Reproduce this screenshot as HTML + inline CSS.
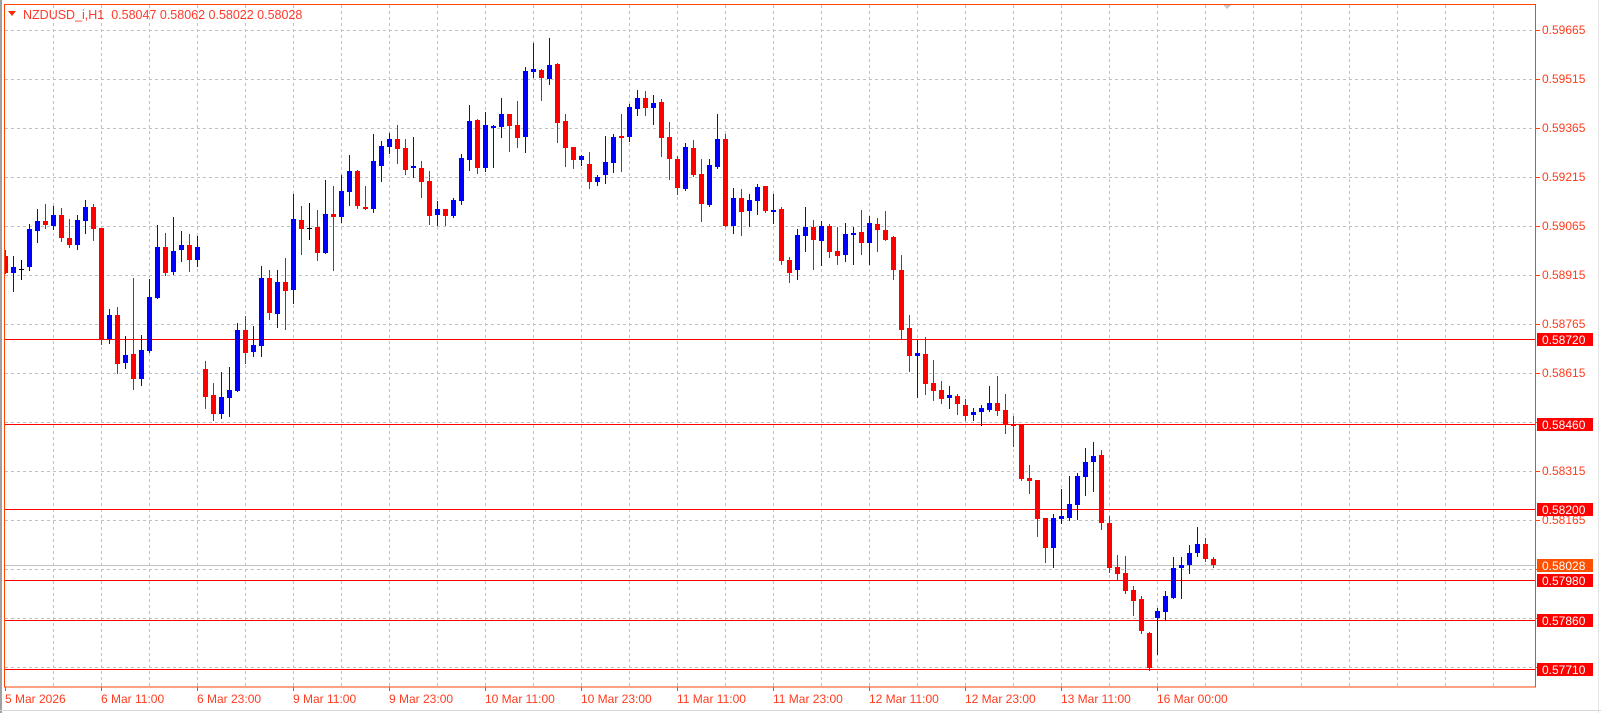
<!DOCTYPE html>
<html><head><meta charset="utf-8"><style>
html,body{margin:0;padding:0;background:#fff;}
body{width:1601px;height:713px;overflow:hidden;position:relative;}
svg{position:absolute;left:0;top:0;}
text{font-family:"Liberation Sans",sans-serif;font-size:12px;}
</style></head><body>
<svg id="s" width="1601" height="713" xmlns="http://www.w3.org/2000/svg" shape-rendering="crispEdges">
<rect x="0" y="0" width="2" height="713" fill="#a0a0a0"/>
<rect x="0" y="710" width="1601" height="1" fill="#d8d8d8"/>
<rect x="1598" y="0" width="1" height="713" fill="#e4e4e4"/>
<g id="grid"></g>
<g id="lines"></g>
<g id="candles"></g>
<rect x="4.5" y="4.5" width="1531" height="682.5" fill="none" stroke="#ff4500" stroke-width="1"/>
<polygon points="1223,5 1231,5 1227,9" fill="#c8c8c8"/>
<polygon points="8,11 16,11 12,16" fill="#ff2a00" shape-rendering="auto"/>
<text x="23" y="19" fill="#ff3a2a" style="font-size:12.5px;white-space:pre" xml:space="preserve">NZDUSD_i,H1  0.58047 0.58062 0.58022 0.58028</text>
<g id="axis"></g>
<g id="time" fill="#ff3c1e">
<text x="5" y="703">5 Mar 2026</text>
<text x="101" y="703">6 Mar 11:00</text>
<text x="197" y="703">6 Mar 23:00</text>
<text x="293" y="703">9 Mar 11:00</text>
<text x="389" y="703">9 Mar 23:00</text>
<text x="485" y="703">10 Mar 11:00</text>
<text x="581" y="703">10 Mar 23:00</text>
<text x="677" y="703">11 Mar 11:00</text>
<text x="773" y="703">11 Mar 23:00</text>
<text x="869" y="703">12 Mar 11:00</text>
<text x="965" y="703">12 Mar 23:00</text>
<text x="1061" y="703">13 Mar 11:00</text>
<text x="1157" y="703">16 Mar 00:00</text>
</g>
<g id="plabels" fill="#ff3c1e">
<text x="1542" y="34">0.59665</text>
<text x="1542" y="83">0.59515</text>
<text x="1542" y="132">0.59365</text>
<text x="1542" y="181">0.59215</text>
<text x="1542" y="230">0.59065</text>
<text x="1542" y="279">0.58915</text>
<text x="1542" y="328">0.58765</text>
<text x="1542" y="377">0.58615</text>
<text x="1542" y="475">0.58315</text>
<text x="1542" y="524">0.58165</text>
</g>
<g id="boxes"></g>
</svg>
<script>
var NS="http://www.w3.org/2000/svg";
function el(p,t,a){var e=document.createElementNS(NS,t);for(var k in a)e.setAttribute(k,a[k]);p.appendChild(e);return e;}
var g=document.getElementById('grid');
for(var n=0;n<14;n++){var y=30+49*n+0.5;el(g,'line',{x1:5,x2:1535,y1:y,y2:y,stroke:'#c0c0c0','stroke-dasharray':'3 3'});}
for(var x=53;x<1535;x+=48){el(g,'line',{x1:x+0.5,x2:x+0.5,y1:5,y2:687,stroke:'#c0c0c0','stroke-dasharray':'3 3'});}
var ax=document.getElementById('axis');
for(var n=0;n<14;n++){var y=30+49*n+0.5;el(ax,'line',{x1:1536,x2:1540,y1:y,y2:y,stroke:'#ff4500'});}
var tx=[5,101,197,293,389,485,581,677,773,869,965,1061,1157];
tx.forEach(function(x){el(ax,'line',{x1:x+0.5,x2:x+0.5,y1:687,y2:691,stroke:'#ff4500'});});
var L=document.getElementById('lines');
var hl=[338.7,423.6,508.6,580.4,619.6,668.6];
hl.forEach(function(y){var yy=Math.round(y)+0.5;el(L,'line',{x1:5,x2:1536,y1:yy,y2:yy,stroke:'#ff0000'});});
el(L,'line',{x1:5,x2:1536,y1:565.5,y2:565.5,stroke:'#c0c0c0'});
var B=document.getElementById('boxes');
var bx=[[338.7,'0.58720','#ff0000'],[423.6,'0.58460','#ff0000'],[508.6,'0.58200','#ff0000'],[564.8,'0.58028','#ff5000'],[580.4,'0.57980','#ff0000'],[619.6,'0.57860','#ff0000'],[668.6,'0.57710','#ff0000']];
bx.forEach(function(b){var y=Math.round(b[0]);el(B,'rect',{x:1537,y:y-6,width:56,height:13,fill:b[2]});var t=el(B,'text',{x:1542,y:y+5,fill:'#fff'});t.textContent=b[1];});
var D=[
['r',250,273,256,273],['b',256,291,267,273],['k',260,279,269,270],['b',224,270,229,267],['b',209,242,221,231],
['r',204,228,221,225],['b',206,229,215,226],['r',208,241,215,238],['r',219,247,238,245],['b',215,249,220,245],
['b',200,233,207,221],['r',204,240,207,229],['r',228,344,228,339],['b',309,343,315,339],['r',307,373,315,364],
['b',336,368,355,363],['r',278,389,354,379],['b',335,385,350,379],['b',279,352,297,351],['b',225,298,247,298],
['r',233,275,247,273],['b',217,274,251,272],['b',231,261,245,250],['r',234,271,245,260],['b',236,266,247,260],
['r',361,408,369,397],['r',383,420,395,414],['b',372,418,397,414],['b',367,416,390,398],['b',323,391,330,391],
['r',316,363,330,353],['b',326,356,345,352],['b',266,356,278,346],['r',270,319,278,313],['b',270,327,282,314],
['r',258,329,282,291],['b',194,303,219,290],['r',206,254,220,229],['k',203,239,228,229],['r',210,260,227,253],
['b',180,253,214,253],['r',186,270,214,217],['b',175,222,191,217],['b',155,205,171,192],['r',170,208,171,206],
['r',186,209,207,209],['b',134,212,161,209],['b',141,181,146,166],['b',133,153,139,147],['r',125,163,139,149],
['r',139,174,148,170],['b',137,177,166,168],['r',161,197,168,182],['r',171,224,181,216],['b',201,225,209,215],
['r',209,225,209,216],['b',198,217,200,216],['b',154,204,158,201],['b',105,170,121,160],['r',119,173,120,168],
['b',112,171,125,168],['b',125,167,126,128],['b',98,137,114,127],['r',114,151,114,126],['r',101,147,125,138],
['b',67,152,71,137],['b',43,77,69,72],['r',69,100,70,78],['b',38,84,65,79],['r',63,142,64,123],
['r',114,166,121,148],['r',147,168,147,160],['b',155,165,156,160],['r',152,188,164,182],['b',175,185,177,182],
['b',136,183,162,175],['b',134,172,137,163],['r',114,171,136,138],['b',104,141,107,137],['b',90,115,98,109],
['r',91,115,98,108],['b',95,124,103,108],['r',99,156,102,138],['r',122,179,137,159],['r',156,194,159,188],
['b',143,190,147,189],['r',140,176,148,175],['r',159,221,174,204],['b',159,206,165,205],['b',114,168,139,167],
['r',134,226,139,226],['b',188,233,198,226],['r',189,235,198,212],['b',194,226,200,211],['b',184,214,187,201],
['r',186,212,186,211],['b',194,223,210,212],['r',207,264,209,261],['r',257,282,260,273],['b',229,279,235,270],
['b',207,251,227,236],['r',220,269,227,240],['b',221,265,226,241],['r',224,257,226,252],['r',227,264,251,256],
['b',223,261,234,255],['b',227,264,233,235],['r',210,254,232,243],['b',216,264,223,243],['r',218,251,224,230],
['r',211,240,230,240],['r',236,279,237,270],['r',255,339,270,330],['r',315,371,328,356],['b',340,397,353,356],
['r',337,394,354,384],['r',360,400,383,391],['r',381,403,390,399],['b',386,408,395,398],['r',394,414,396,404],
['r',399,420,405,416],['b',408,420,412,415],['b',405,425,408,412],['b',386,411,403,410],['r',376,415,403,411],
['r',394,433,410,425],['r',416,446,424,426],['r',425,480,425,479],['r',465,493,478,481],['r',480,536,480,519],
['r',518,562,518,548],['b',514,567,518,548],['b',489,523,516,519],['b',476,520,504,518],['b',473,519,476,505],
['b',448,495,462,477],['b',442,491,456,462],['r',450,529,455,523],['r',516,572,523,568],['r',555,580,567,574],
['r',556,593,573,591],['r',586,615,590,601],['r',596,633,599,631],['r',632,670,633,668],['b',608,654,611,618],
['b',591,620,596,612],['b',557,598,568,598],['b',557,598,565,568],['b',545,573,553,565],['b',527,556,544,553],
['r',538,561,544,559],['r',557,567,559,565]
];
var C=document.getElementById('candles');
var col={r:'#ff0000',b:'#0000ff',k:'#000000'};
D.forEach(function(d,k){var cx=5+8*k;var c=col[d[0]];
 var hi=Math.max(d[1],5);
 el(C,'rect',{x:cx,y:hi,width:1,height:d[2]-hi+1,fill:c});
 var h=Math.max(d[4]-d[3],1);
 if(d[0]=='k'){el(C,'rect',{x:cx-2,y:d[3],width:5,height:1,fill:c});}
 else el(C,'rect',{x:Math.max(cx-2,5),y:d[3],width:(cx-2<5?5-(5-(cx-2)):5),height:h,fill:c});
});
</script>
</body></html>
